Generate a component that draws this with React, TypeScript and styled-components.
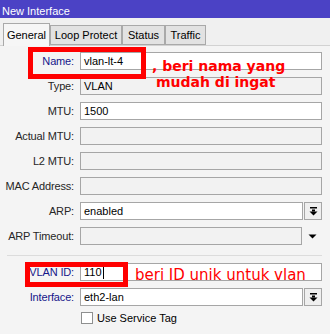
import styled, { createGlobalStyle } from "styled-components";

const GlobalStyle = createGlobalStyle`
	html,
	body {
		margin: 0;
		padding: 0;
		background: #f0f0f0;
	}

	body {
		font-family: "Liberation Sans", Arial, sans-serif;
	}
`;

const Window = styled.div`
	position: relative;
	width: 330px;
	height: 334px;
	background: #f4f4f4;
	overflow: hidden;
`;

const TitleBar = styled.div`
	box-sizing: border-box;
	height: 18px;
	padding: 5px 0 0 2px;
	background: #4b42c5;
	color: #ffffff;
	font-size: 11px;
	line-height: 13px;
`;

const TabStrip = styled.div`
	display: flex;
	align-items: flex-end;
	height: 22px;
	padding: 5px 0 0 3px;
	background: #f0f0f0;
	border-bottom: 1px solid #d2d2d2;
`;

const Tab = styled.div<{ $active?: boolean; $width: number }>`
	box-sizing: border-box;
	position: relative;
	z-index: ${({ $active }) => ($active ? 1 : 0)};
	width: ${({ $width }) => $width}px;
	height: ${({ $active }) => ($active ? 23 : 20)}px;
	margin-bottom: ${({ $active }) => ($active ? -1 : 0)}px;
	padding-top: ${({ $active }) => ($active ? 2 : 0)}px;
	border: 1px solid #a9a9a9;
	border-bottom: ${({ $active }) => ($active ? "none" : "1px solid #a9a9a9")};
	background: ${({ $active }) => ($active ? "#f6f6f6" : "#e2e2e2")};
	color: #000000;
	font-size: 11px;
	line-height: 18px;
	text-align: center;
	white-space: nowrap;
`;

const Form = styled.div`
	padding-top: 6px;
`;

const FieldGrid = styled.div`
	display: grid;
	grid-template-columns: 74px 242px;
	grid-auto-rows: 18px;
	column-gap: 6px;
	row-gap: 7px;
`;

const Label = styled.div<{ $accent?: boolean }>`
	text-align: right;
	font-size: 11px;
	line-height: 18px;
	letter-spacing: -0.15px;
	white-space: nowrap;
	color: ${({ $accent }) => ($accent ? "#16168a" : "#262626")};
`;

const Field = styled.div<{ $readOnly?: boolean }>`
	box-sizing: border-box;
	flex: 1;
	height: 18px;
	padding-left: 3px;
	border: 1px solid #a6a6a6;
	background: ${({ $readOnly }) => ($readOnly ? "#f2f2f2" : "#ffffff")};
	color: #000000;
	font-size: 11px;
	line-height: 16px;
	white-space: nowrap;
	overflow: hidden;
`;

const ComboRow = styled.div`
	display: flex;
	gap: 1px;
`;

const DropButton = styled.div`
	box-sizing: border-box;
	display: flex;
	align-items: center;
	justify-content: center;
	width: 18px;
	height: 18px;
	border: 1px solid #a6a6a6;
	background: #efefef;
`;

const ArrowSlot = styled.div`
	display: flex;
	align-items: center;
	justify-content: center;
	width: 19px;
`;

const Separator = styled.div`
	width: 315px;
	height: 1px;
	margin: 10px 0 7px 7px;
	background: #dcdcdc;
`;

const CheckRow = styled.div`
	grid-column: 2;
	display: flex;
	align-items: center;
	gap: 4px;
	height: 12px;
	margin-top: -1px;
	padding-left: 1px;
	font-size: 11px;
	color: #000000;
`;

const CheckBox = styled.span`
	box-sizing: border-box;
	width: 12px;
	height: 12px;
	border: 1px solid #8e8f8f;
	background: #ffffff;
`;

const Caret = styled.span`
	display: inline-block;
	width: 1px;
	height: 13px;
	margin-left: 1px;
	vertical-align: -3px;
	background: #000000;
`;

const RedBox = styled.div<{ $left: number; $top: number; $w: number; $h: number }>`
	position: absolute;
	box-sizing: border-box;
	left: ${({ $left }) => $left}px;
	top: ${({ $top }) => $top}px;
	width: ${({ $w }) => $w}px;
	height: ${({ $h }) => $h}px;
	border: 5px solid #ff0000;
`;

const NameNote = styled.div`
	position: absolute;
	left: 152px;
	top: 58px;
	color: #ff0000;
	font-family: "DejaVu Sans", Verdana, sans-serif;
	font-size: 14px;
	font-weight: bold;
	line-height: 16px;
	white-space: nowrap;

	span {
		display: block;
		padding-left: 4px;
	}
`;

const VlanNote = styled.div`
	position: absolute;
	left: 135px;
	top: 266px;
	color: #ff0000;
	font-family: "DejaVu Sans", Verdana, sans-serif;
	font-size: 15px;
	line-height: 18px;
	white-space: nowrap;
`;

const DropIcon = () => (
	<svg width="9" height="9" viewBox="0 0 9 9">
		<rect x="1" y="0" width="7" height="1.5" fill="#000" />
		<rect x="3" y="2.5" width="3" height="2" fill="#000" />
		<polygon points="0.5,4.5 8.5,4.5 4.5,8.5" fill="#000" />
	</svg>
);

const DownArrow = () => (
	<svg width="9" height="5" viewBox="0 0 9 5">
		<polygon points="0.5,0.5 8.5,0.5 4.5,4.5" fill="#000" />
	</svg>
);

export default function App() {
	return (
		<>
			<GlobalStyle />
			<Window>
				<TitleBar>New Interface</TitleBar>
				<TabStrip>
					<Tab $active $width={47}>General</Tab>
					<Tab $width={72}>Loop Protect</Tab>
					<Tab $width={43}>Status</Tab>
					<Tab $width={41}>Traffic</Tab>
				</TabStrip>
				<Form>
					<FieldGrid>
						<Label $accent>Name:</Label>
						<Field>vlan-lt-4</Field>
						<Label>Type:</Label>
						<Field $readOnly>VLAN</Field>
						<Label>MTU:</Label>
						<Field>1500</Field>
						<Label>Actual MTU:</Label>
						<Field $readOnly />
						<Label>L2 MTU:</Label>
						<Field $readOnly />
						<Label>MAC Address:</Label>
						<Field $readOnly />
						<Label>ARP:</Label>
						<ComboRow>
							<Field>enabled</Field>
							<DropButton>
								<DropIcon />
							</DropButton>
						</ComboRow>
						<Label>ARP Timeout:</Label>
						<ComboRow>
							<Field $readOnly />
							<ArrowSlot>
								<DownArrow />
							</ArrowSlot>
						</ComboRow>
					</FieldGrid>
					<Separator />
					<FieldGrid>
						<Label $accent>VLAN ID:</Label>
						<Field>
							110
							<Caret />
						</Field>
						<Label $accent>Interface:</Label>
						<ComboRow>
							<Field>eth2-lan</Field>
							<DropButton>
								<DropIcon />
							</DropButton>
						</ComboRow>
						<CheckRow>
							<CheckBox />
							Use Service Tag
						</CheckRow>
					</FieldGrid>
				</Form>
				<RedBox $left={28} $top={47} $w={118} $h={32} />
				<RedBox $left={25} $top={262} $w={103} $h={25} />
				<NameNote>
					, beri nama yang
					<span>mudah di ingat</span>
				</NameNote>
				<VlanNote>beri ID unik untuk vlan</VlanNote>
			</Window>
		</>
	);
}
